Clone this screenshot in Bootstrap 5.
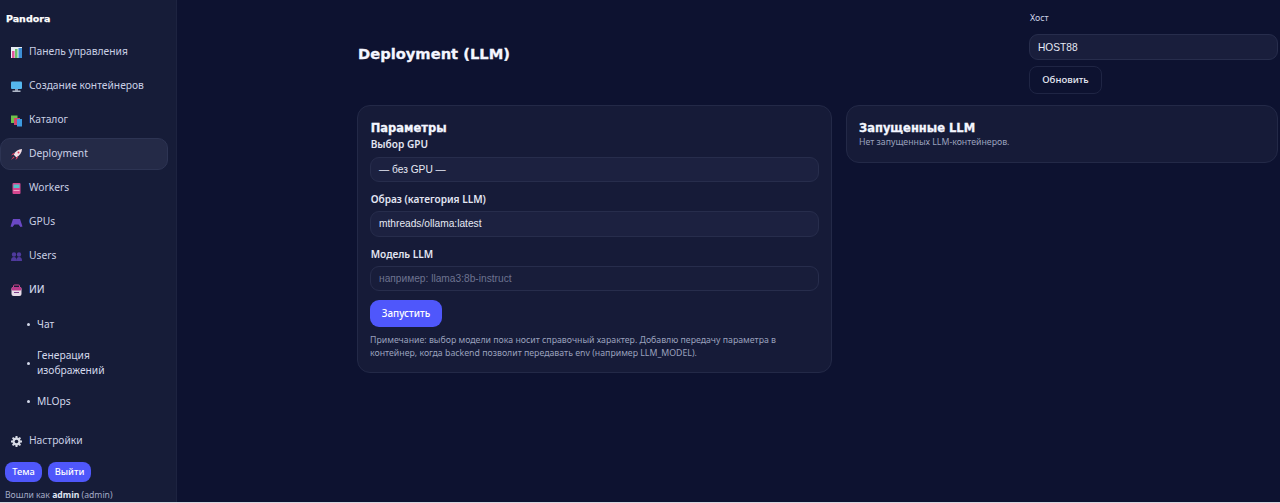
<!doctype html>
<html lang="ru">
<head>
<meta charset="utf-8">
<title>Pandora</title>
<link href="https://cdn.jsdelivr.net/npm/bootstrap@5.3.0/dist/css/bootstrap.min.css" rel="stylesheet">
<style>
html,body{height:100%;}
body{background:#d4d7e0;color:#e6e9f5;font-family:"Noto Sans","Liberation Sans",sans-serif;font-size:10.25px;overflow:hidden;}
.shell{height:502px;background:#0d1230;}
.side{width:177px;flex:none;background:#161c38;border-right:1px solid #1d2340;padding:13px 8px 0 0;height:502px;}
.brand{font-family:"DejaVu Sans",sans-serif;font-weight:700;font-size:9.5px;color:#fff;margin:0 0 0 6px;line-height:12px;height:12px;-webkit-text-stroke:.25px #fff;}
.nav-item-x{display:flex;align-items:center;height:32px;margin-bottom:2px;padding-left:9px;color:#c9cfe4;font-size:10.25px;border-radius:10px;border:1px solid transparent;text-decoration:none;}
.nav-item-x svg{width:13px;height:13px;flex:none;margin-right:6px;}
.nav-item-x.on{background:#242a47;border-color:#2d3453;color:#cdd3e8;}
.items{margin-top:11px;}
.sub-x{display:flex;align-items:center;color:#d3d8ea;font-size:10.25px;padding-left:27px;text-decoration:none;line-height:15.5px;}
.sub-x i{display:block;width:3px;height:3px;background:#d3d8ea;border-radius:50%;margin-right:7px;flex:none;}
.btn-x{background:#4f57fb;color:#fff;border:0;border-radius:8px;font-size:9.3px;font-weight:500;height:20px;padding:0;line-height:20px;}
.who{font-size:8.65px;color:#a4abc6;margin:7px 0 0 5px;line-height:12px;white-space:nowrap;}
.who b{color:#dfe3f2;font-weight:700;}
.main-x{flex:1;padding:0 2px 0 180px;min-width:0;}
.head-x{height:105px;}
.page-title{font-family:"DejaVu Sans",sans-serif;font-weight:700;font-size:14.7px;color:#f4f6ff;margin:0;padding:45px 0 0 1px;line-height:18px;-webkit-text-stroke:.3px #f4f6ff;}
.host-box{width:249px;padding-top:12px;}
.host-label{font-size:8.8px;color:#c9cfe4;line-height:12px;height:12px;padding-left:1px;}
.field-x{display:block;width:100%;height:25px;border-radius:9px;background:#1c2140;border:1px solid #272d4c;color:#e6e9f5;font-family:"Liberation Sans",sans-serif;font-size:10.2px;padding:0 8px;line-height:23px;}
.field-x::placeholder{color:#6d7390;opacity:1;}
.host-box .field-x{margin-top:10px;background:#191e3c;height:26px;line-height:24px;}
.ghost-x{display:block;margin-top:6px;width:73px;height:28px;border-radius:8px;background:transparent;border:1px solid #1f2544;color:#e6e9f5;font-size:9.6px;font-weight:500;padding:0;}
.panels{column-gap:14px;}
.panel-x{background:#161b38;border:1px solid #232947;border-radius:13px;}
.panel-a{width:475px;height:268px;padding:15px 12px 0;}
.panel-b{flex:1;height:58px;padding:15px 12px 0;}
.panel-title{font-family:"DejaVu Sans",sans-serif;font-weight:700;font-size:11.5px;color:#f4f6ff;margin:0;line-height:14px;-webkit-text-stroke:.3px #f4f6ff;}
.panel-a .panel-title,.lab-x{padding-left:.7px;}
.lab-x{display:block;font-weight:600;font-size:10.1px;color:#e3e6f3;line-height:13px;margin:0 0 5px;}
.note-x{font-size:8.75px;line-height:13px;color:#9aa1bd;margin:0;}
.go-x{background:#4f57fb;color:#fff;border:0;border-radius:9px;height:27px;width:72px;font-size:9.9px;font-weight:500;padding:0;display:block;margin:9px 0 7px;}
</style>
</head>
<body>
<div class="d-flex shell">
  <aside class="side d-flex flex-column">
    <div class="brand">Pandora</div>
    <nav class="items">
      <a class="nav-item-x" href="#"><svg viewBox="0 0 13 13"><rect x="1" y="1" width="11" height="11" fill="#e8ecf4"/><rect x="2" y="5" width="2.5" height="7" fill="#e0559a"/><rect x="5" y="3" width="2.5" height="9" fill="#6cc06a"/><rect x="8.5" y="2" width="3.5" height="10" fill="#3d8fd6"/></svg>Панель управления</a>
      <a class="nav-item-x" href="#"><svg viewBox="0 0 13 13"><rect x="1" y="1.5" width="11" height="7.5" rx="1" fill="#55b7ee"/><rect x="5" y="9" width="3" height="2" fill="#8d96aa"/><rect x="2.5" y="10.5" width="8" height="1.5" fill="#aeb6c8"/></svg>Создание контейнеров</a>
      <a class="nav-item-x" href="#"><svg viewBox="0 0 13 13"><rect x="1" y="1.5" width="6.5" height="7.5" fill="#6cc04a"/><rect x="4" y="4" width="6" height="7" fill="#d0486e"/><rect x="7" y="5" width="5" height="7.5" fill="#3d9ae0"/></svg>Каталог</a>
      <a class="nav-item-x on" href="#"><svg viewBox="0 0 13 13"><path d="M12 1C8.500 1.200 5.500 3 3.600 6.600l2.800 2.800C10 7.500 11.800 4.500 12 1z" fill="#f2dfe6"/><path d="M3.600 6.600L1 7.500l2-2.300 2-.3zM6.400 9.400L5.500 12l2.300-2 .3-2z" fill="#e23d5c"/><path d="M3.500 8.500L1 12l3.500-2.500z" fill="#e23d5c"/><circle cx="8.500" cy="4.500" r="1" fill="#e23d5c"/></svg>Deployment</a>
      <a class="nav-item-x" href="#"><svg viewBox="0 0 13 13"><rect x="2.500" y="1" width="8" height="11" rx="1" fill="#d6468f"/><rect x="3.500" y="2.500" width="6" height="3.500" fill="#54c3c9"/><rect x="3.500" y="8" width="6" height="1" fill="#f0a5c8"/></svg>Workers</a>
      <a class="nav-item-x" href="#"><svg viewBox="0 0 13 13"><path d="M3 3h7l2.500 7.500-2 .5-2-2.500H4.500L2.500 11l-2-.5z" fill="#6a48c4"/></svg>GPUs</a>
      <a class="nav-item-x" href="#"><svg viewBox="0 0 13 13"><circle cx="4" cy="4.500" r="2.200" fill="#4f3a9c"/><circle cx="9" cy="4.500" r="2.200" fill="#4f3a9c"/><path d="M1 11c0-3 1-4 3-4s2.500 1 2.500 4zM6.500 11c0-3 .5-4 2.500-4s3 1 3 4z" fill="#4f3a9c"/></svg>Users</a>
      <a class="nav-item-x" href="#"><svg viewBox="0 0 13 13"><rect x="3.500" y="1" width="6" height="3" rx="1" fill="none" stroke="#d6468f" stroke-width="1"/><rect x="1.500" y="3" width="10" height="9" rx="2" fill="#e8dce8"/><rect x="1.500" y="3" width="10" height="3.500" rx="1.500" fill="#b93a8a"/><rect x="4" y="8" width="5" height="1" fill="#7a3e8a"/></svg><span class="fw-medium">ИИ</span></a>
      <div class="d-flex flex-column" style="row-gap:15px;padding-top:9px">
        <a class="sub-x" href="#"><i></i><span>Чат</span></a>
        <a class="sub-x" href="#"><i></i><span>Генерация<br>изображений</span></a>
        <a class="sub-x" href="#"><i></i><span>MLOps</span></a>
      </div>
      <a class="nav-item-x" href="#" style="margin-top:16px;margin-bottom:0"><svg viewBox="0 0 13 13"><g fill="#d8dbe6"><circle cx="6.500" cy="6.500" r="4"/><g stroke="#d8dbe6" stroke-width="2"><path d="M6.500 1v11M1 6.500h11M2.600 2.600l7.800 7.800M10.400 2.600l-7.800 7.800"/></g></g><circle cx="6.500" cy="6.500" r="1.800" fill="#161c38"/></svg>Настройки</a>
    </nav>
    <div class="d-flex" style="margin:5px 0 0 5px;column-gap:6px"><button class="btn-x" style="width:37px">Тема</button><button class="btn-x" style="width:43px">Выйти</button></div>
    <div class="who">Вошли как <b>admin</b> (admin)</div>
  </aside>
  <main class="main-x">
    <div class="d-flex justify-content-between head-x">
      <h1 class="page-title">Deployment (LLM)</h1>
      <div class="host-box">
        <div class="host-label">Хост</div>
        <input class="field-x" value="HOST88" aria-label="Хост">
        <button class="ghost-x">Обновить</button>
      </div>
    </div>
    <div class="d-flex align-items-start panels">
      <section class="panel-x panel-a">
        <h2 class="panel-title">Параметры</h2>
        <label class="lab-x" style="margin-top:3px;margin-bottom:6px">Выбор GPU</label>
        <div class="field-x">— без GPU —</div>
        <label class="lab-x" style="margin-top:11px">Образ (категория LLM)</label>
        <div class="field-x" style="height:26px;line-height:24px">mthreads/ollama:latest</div>
        <label class="lab-x" style="margin-top:11px">Модель LLM</label>
        <input class="field-x" style="background:#181d3a" placeholder="например: llama3:8b-instruct" aria-label="Модель LLM">
        <button class="go-x">Запустить</button>
        <p class="note-x">Примечание: выбор модели пока носит справочный характер. Добавлю передачу параметра в контейнер, когда backend позволит передавать env (например LLM_MODEL).</p>
      </section>
      <section class="panel-x panel-b">
        <h2 class="panel-title">Запущенные LLM</h2>
        <p class="note-x" style="line-height:15px">Нет запущенных LLM-контейнеров.</p>
      </section>
    </div>
  </main>
</div>
</body>
</html>
